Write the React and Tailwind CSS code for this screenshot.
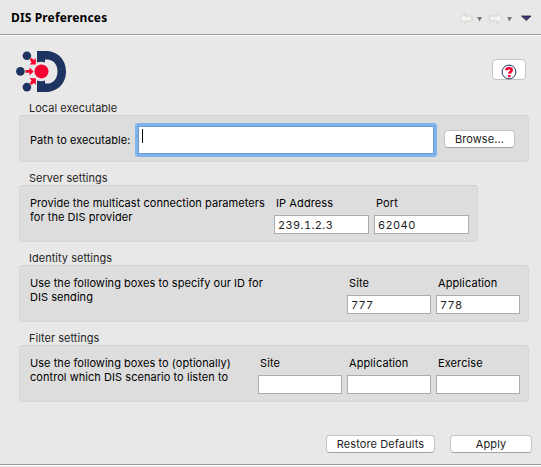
function Group({ title, className, children }) {
  return (
    <section>
      <h2 className="h-[23px] pl-[10px] pt-[9px] text-[11px] leading-[14px] tracking-[0.02px] text-[#262626]">{title}</h2>
      <div className={`flex rounded-[4px] border border-[#d6d6d6] border-t-[#cecece] bg-[#dddddd] ${className}`}>{children}</div>
    </section>
  );
}

function Description({ children }) {
  return <p className="min-w-0 flex-1 whitespace-nowrap pt-[10px] tracking-[0.05px] text-black">{children}</p>;
}

function Field({ label, value, className }) {
  return (
    <label className={`block shrink-0 pt-[10px] ${className}`}>
      <span className="block pl-[2px] leading-[14px] tracking-[0.1px]">{label}</span>
      <span className="mt-[5px] block h-[19px] border border-[#acacac] bg-white pl-[3px] leading-[18px] tracking-[0.4px] tabular-nums text-[#222]">{value}</span>
    </label>
  );
}

function Button({ className, children }) {
  return (
    <button className={`flex h-[18px] items-center justify-center rounded-[4px] border border-[#c4c4c4] border-b-[#a4a4a4] bg-white text-[11px] leading-[16px] tracking-[0.1px] text-[#222] ${className}`}>
      {children}
    </button>
  );
}

function Logo() {
  return (
    <svg className="block" width="50" height="42" viewBox="0 0 50 42">
      <path d="M21 0h8.500C41 0 50 8 50 20.500S41 41 29.500 41H21V29.500q4 1.500 8 0V32.500C37 33.500 41.500 28 41.500 20.500S37 7.500 29 8.500V11.500q-4-1.500-8 0Z" fill="#1d3461" />
      <g fill="#1d3461">
        <circle cx="10.900" cy="4.700" r="4.300" />
        <circle cx="4.400" cy="20.400" r="4.300" />
        <circle cx="10.900" cy="36.100" r="4.300" />
      </g>
      <g fill="#f80031">
        <circle cx="25.500" cy="20.400" r="7" />
        <path d="M9.500 19h4v-2.600l4.100 4-4.100 4v-2.600H9.500z" />
        <path d="M13.700 8.600l1.900-1.800 2.300 2.100 1.900-1.900.1 6.500-6.500.1 2.200-2.200z" />
        <path d="M13.700 32.200l1.900 1.800 2.300-2.100 1.900 1.900.1-6.500-6.500-.1 2.200 2.200z" />
      </g>
    </svg>
  );
}

function ViewControls() {
  return (
    <svg className="block" width="74" height="14" viewBox="0 0 74 14">
      <g fill="#f1f1ee" stroke="#d2d2cf" strokeWidth="1">
        <path d="M.5 7.500L6 2V5H13V10H6V13Z" />
        <path d="M43.500 7.500L38 2V5H30.500V10H38V13Z" />
      </g>
      <path d="M18 6h5l-2.500 4.500zM48 6h5l-2.500 4.500z" fill="#777" />
      <path d="M62.500 5h9.500l-4.750 4.500z" fill="#4a3585" stroke="#241e2c" strokeWidth=".8" />
    </svg>
  );
}

export default function App() {
  return (
    <main className="flex h-[467px] w-[541px] flex-col overflow-hidden bg-[#e8e8e8] font-['Inter',sans-serif] text-[11px] leading-[14px] text-black">
      <header className="flex h-[36px] shrink-0 items-center justify-between border-b border-white pl-[11px] pr-[8px] shadow-[inset_0_-1px_0_#999]">
        <h1 className="font-['Noto_Sans',sans-serif] text-[12px] font-bold leading-[16px] tracking-[0.14px]">DIS Preferences</h1>
        <ViewControls />
      </header>
      <div className="flex h-[56px] shrink-0 items-start justify-between pl-[16px] pr-[15px] pt-[15px]">
        <Logo />
        <button className="mt-[8px] flex h-[21px] w-[34px] items-center justify-center rounded-[4px] border border-[#c4c4c4] bg-white pt-[4px]">
          <svg width="16" height="16" viewBox="0 0 16 16">
            <circle cx="8" cy="8" r="6.900" fill="#fff" stroke="#1d3461" />
            <path d="M5.300 6.300C5.300 3.500 10.700 3.600 10.700 6.100 10.700 8 8.300 7.700 8.300 9.800M8.300 11v2.200" fill="none" stroke="#f80031" strokeWidth="2.600" />
          </svg>
        </button>
      </div>
      <div className="flex flex-col pl-[19px] pr-[12px]">
        <Group title="Local executable" className="h-[47px] pl-[10px]">
          <span className="w-[105px] shrink-0 whitespace-nowrap pt-[17px] tracking-[0.05px]">Path to executable:</span>
          <div className="mt-[7px] h-[34px] w-[302px] shrink-0 rounded-[3px] bg-[#82b4ec] p-[3px]">
            <div className="h-full border border-[#659bd5] bg-white pl-[3px] pt-[2px]">
              <div className="h-[14px] w-px bg-black" />
            </div>
          </div>
          <Button className="ml-[7px] mt-[14px] w-[71px] shrink-0">Browse...</Button>
        </Group>
        <Group title="Server settings" className="h-[57px] w-[459px] gap-[5px] pl-[10px] pr-[8px]">
          <Description>Provide the multicast connection parameters<br />for the DIS provider</Description>
          <Field label="IP Address" value="239.1.2.3" className="w-[95px]" />
          <Field label="Port" value="62040" className="w-[95px]" />
        </Group>
        <Group title="Identity settings" className="h-[57px] gap-[5px] pl-[10px] pr-[8px]">
          <Description>Use the following boxes to specify our ID for<br />DIS sending</Description>
          <Field label="Site" value="777" className="w-[84px]" />
          <Field label="Application" value="778" className="w-[84px]" />
        </Group>
        <Group title="Filter settings" className="h-[57px] gap-[5px] pl-[10px] pr-[8px]">
          <Description>Use the following boxes to (optionally)<br />control which DIS scenario to listen to</Description>
          <Field label="Site" className="w-[84px]" />
          <Field label="Application" className="w-[84px]" />
          <Field label="Exercise" className="w-[84px]" />
        </Group>
      </div>
      <footer className="mt-auto flex h-[65px] shrink-0 flex-col">
        <div className="flex flex-1 justify-end gap-[15px] pr-[9px] pt-[33px]">
          <Button className="w-[109px]">Restore Defaults</Button>
          <Button className="w-[82px]">Apply</Button>
        </div>
        <div className="mb-px h-[2px] border-b border-white bg-[#999]" />
      </footer>
    </main>
  );
}
